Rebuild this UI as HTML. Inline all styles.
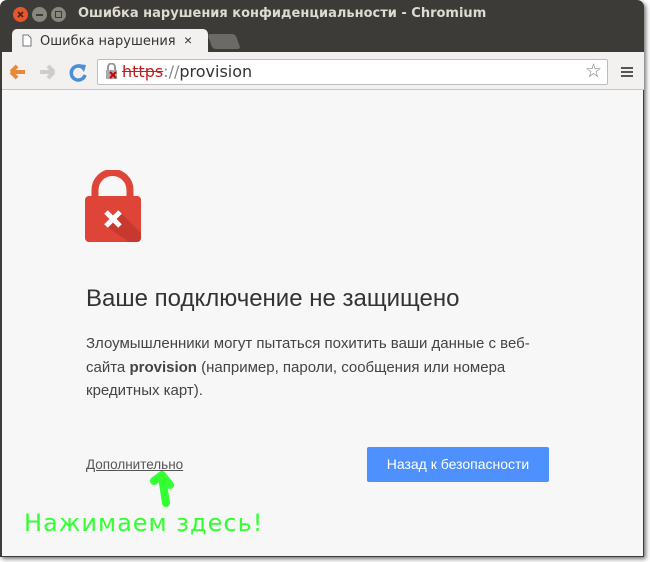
<!DOCTYPE html>
<html><head><meta charset="utf-8"><style>
*{margin:0;padding:0;box-sizing:border-box}
body{width:650px;height:562px;background:#fff;position:relative;overflow:hidden;font-family:"Liberation Sans","DejaVu Sans",sans-serif}
.win{position:absolute;left:0;top:0;width:644px;height:557px;background:#3c3b37;border-radius:7px 7px 0 0;box-shadow:2px 2px 4px rgba(0,0,0,.55)}
.title{position:absolute;left:78px;top:6px;color:#dfdbd2;font-weight:bold;font-size:13px;font-family:"DejaVu Sans",sans-serif}
.b{position:absolute;top:7px;width:15px;height:15px;border-radius:50%}
.tab{position:absolute;left:12px;top:29px;width:196px;height:24px;background:#f2f1f0;border-radius:5px 5px 0 0}
.tab2{position:absolute;left:210px;top:34px;width:28px;height:15px;background:#6b6a66;border-radius:3px;transform:skewX(20deg)}
.tool{position:absolute;left:2px;top:52px;width:642px;height:38px;background:#f2f1f0;border-bottom:1px solid #c8c8c8}
.omni{position:absolute;left:97px;top:59px;width:511px;height:26px;background:#fff;border:1px solid #bdbdbd;border-radius:2px}
.content{position:absolute;left:2px;top:90px;width:641px;height:466px;background:#f7f7f7;overflow:hidden}
</style></head><body>
<div class="win">
<div class="b" style="left:13px;background:#e8552c"></div>
<svg style="position:absolute;left:13px;top:7px" width="15" height="15"><path d="M5 5l5 5M10 5l-5 5" stroke="#3c2a20" stroke-width="1.6"/></svg>
<div class="b" style="left:32px;background:#88877f"></div>
<div style="position:absolute;left:36px;top:14px;width:7px;height:2px;background:#3c3b37"></div>
<div class="b" style="left:51px;background:#88877f"></div>
<div style="position:absolute;left:55px;top:11px;width:7px;height:7px;border:1.5px solid #3c3b37"></div>
<div class="title">Ошибка нарушения конфиденциальности - Chromium</div>
<div class="tab"></div>
<svg style="position:absolute;left:22px;top:34px" width="10" height="13"><path d="M1 1h5l3 3v8H1z" fill="#fff" stroke="#777"/></svg>
<div style="position:absolute;left:40px;top:34px;font-size:13px;color:#333;font-family:'DejaVu Sans',sans-serif;white-space:nowrap;width:136px;overflow:hidden">Ошибка нарушения конф</div>
<div style="position:absolute;left:184px;top:32px;font-size:14px;color:#333">×</div>
<div class="tab2"></div>
<div class="tool"></div>
<svg style="position:absolute;left:8px;top:62px" width="80" height="20">
<path d="M3 10h14M3 10l6-6M3 10l6 6" stroke="#e88a3a" stroke-width="4" fill="none"/>
<path d="M32 10h14M46 10l-6-6M46 10l-6 6" stroke="#ccc" stroke-width="4" fill="none"/>
<path d="M76 7a7 7 0 1 0 1 6" stroke="#4a8fd8" stroke-width="3.5" fill="none"/><path d="M70 2l8 1-2 7z" fill="#4a8fd8"/>
</svg>
<div class="omni"></div>
<svg style="position:absolute;left:104px;top:63px" width="18" height="18"><rect x="2" y="7" width="11" height="9" fill="#aaa"/><path d="M4 7V4a3.5 3.5 0 0 1 7 0v3" stroke="#999" stroke-width="2" fill="none"/><path d="M6 9l6 6M12 9l-6 6" stroke="#c00" stroke-width="2"/></svg>
<div style="position:absolute;left:122px;top:62px;font-size:16px;color:#333;font-family:'DejaVu Sans',sans-serif"><span style="color:#b22;text-decoration:line-through">https</span><span style="color:#888">://</span>provision</div>
<div style="position:absolute;left:585px;top:60px;font-size:19px;color:#777">☆</div>
<div style="position:absolute;left:621px;top:67px;width:12px;height:2px;background:#555;box-shadow:0 4px #555,0 8px #555"></div>
<div class="content">
<svg style="position:absolute;left:83px;top:80px" width="62" height="75"><defs><clipPath id="c"><rect x="0" y="26" width="56" height="46" rx="4"/></clipPath></defs><path d="M10 28V20a17 17 0 0 1 35 0v8" stroke="#de4437" stroke-width="7" fill="none"/><rect x="0" y="26" width="56" height="46" rx="4" fill="#de4437"/><path d="M35 42L56 63V72H44L21 56z" fill="#b8322a" opacity=".6" clip-path="url(#c)"/><path d="M21 42l14 14M35 42L21 56" stroke="#fff" stroke-width="5"/></svg>
<div style="position:absolute;left:84px;top:195px;font-size:24px;color:#333">Ваше подключение не защищено</div>
<div style="position:absolute;left:84px;top:242px;width:500px;font-size:15px;line-height:23.5px;color:#444">Злоумышленники могут пытаться похитить ваши данные с веб-<br>сайта <b>provision</b> (например, пароли, сообщения или номера<br>кредитных карт).</div>
<div style="position:absolute;left:84px;top:367px;font-size:13.5px;color:#555;text-decoration:underline">Дополнительно</div>
<div style="position:absolute;left:365px;top:357px;width:182px;height:35px;background:#4d90fe;border-radius:2px;color:#fff;font-size:14px;text-align:center;line-height:35px">Назад к безопасности</div>
<svg style="position:absolute;left:143px;top:381px" width="34" height="42"><path d="M9 10l8-6 8 10M17 6l4 26" stroke="#3f3" stroke-width="8" stroke-linecap="round" stroke-linejoin="round" fill="none"/></svg>
<div style="position:absolute;left:22px;top:419px;font-size:24px;color:#3f3;font-family:'DejaVu Sans',sans-serif;letter-spacing:1px">Нажимаем здесь!</div>
</div>
</div>
</body></html>
